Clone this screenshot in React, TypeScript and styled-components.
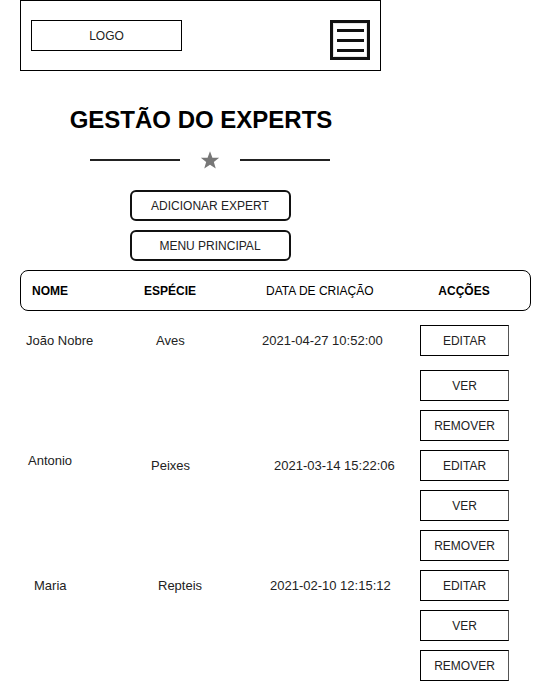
import React from 'react';
import styled, { createGlobalStyle } from 'styled-components';

const GlobalStyle = createGlobalStyle`
    html, body {
        margin: 0;
        padding: 0;
        background: #ffffff;
    }
    body {
        font-family: "Liberation Sans", Arial, sans-serif;
        color: #1a1a1a;
    }
`;

const Page = styled.div`
    width: 533px;
    min-height: 681px;
    display: flex;
    flex-direction: column;
`;

const TopBar = styled.header`
    box-sizing: border-box;
    margin-left: 20px;
    width: 361px;
    height: 71px;
    border: 1px solid #000;
    display: flex;
    justify-content: space-between;
    align-items: flex-start;
    padding: 19px 10px 0 10px;
`;

const LogoBox = styled.div`
    box-sizing: border-box;
    width: 151px;
    height: 31px;
    border: 1px solid #000;
    display: flex;
    align-items: center;
    justify-content: center;
    font-size: 12px;
    color: #222;
`;

const MenuIcon = styled.div`
    box-sizing: border-box;
    width: 40px;
    height: 40px;
    border: 3px solid #111;
    box-shadow: inset 0 0 0 1px #e6e6e6;
    display: flex;
    flex-direction: column;
    justify-content: center;
    align-items: center;
    gap: 7px;

    span {
        display: block;
        width: 27px;
        height: 3px;
        background: #111;
    }
`;

const Hero = styled.section`
    width: 420px;
    display: flex;
    flex-direction: column;
    align-items: center;
    margin-top: 35px;
`;

const Title = styled.h1`
    margin: 0;
    padding-right: 18px;
    font-size: 24px;
    line-height: 28px;
    font-weight: 700;
    color: #000;
`;

const Divider = styled.div`
    display: flex;
    align-items: center;
    gap: 20px;
    margin-top: 16px;
    height: 20px;
`;

const Rule = styled.div`
    width: 90px;
    height: 2px;
    background: #222;
`;

const ButtonStack = styled.div`
    display: flex;
    flex-direction: column;
    gap: 9px;
    margin-top: 20px;
`;

const RoundButton = styled.button`
    box-sizing: border-box;
    width: 161px;
    height: 31px;
    border: 2px solid #111;
    border-radius: 6px;
    background: #fff;
    font-family: "Liberation Sans", Arial, sans-serif;
    font-size: 12px;
    color: #222;
    padding: 0;
`;

const TableHead = styled.div`
    box-sizing: border-box;
    margin: 9px 0 0 20px;
    width: 511px;
    height: 41px;
    border: 1px solid #000;
    border-radius: 8px;
    display: grid;
    grid-template-columns: 112px 122px 154px 88px;
    align-items: center;
    padding-left: 11px;
`;

const HeadCell = styled.div<{ $bold?: boolean; $center?: boolean }>`
    font-size: 12px;
    font-weight: ${p => (p.$bold ? 700 : 400)};
    color: #000;
    text-align: ${p => (p.$center ? 'center' : 'left')};
    white-space: nowrap;
`;

const Rows = styled.div`
    display: flex;
    flex-direction: column;
    gap: 9px;
    margin: 14px 0 0 32px;
`;

const Row = styled.div`
    display: grid;
    grid-template-columns: 112px 122px 154px 88px;
    align-items: start;
`;

const Cell = styled.div<{ $dx?: number; $dy?: number }>`
    height: 31px;
    line-height: 31px;
    font-size: 13px;
    color: #222;
    white-space: nowrap;
    transform: translate(${p => p.$dx ?? 0}px, ${p => p.$dy ?? 0}px);
`;

const Actions = styled.div<{ $first?: boolean }>`
    display: flex;
    flex-direction: column;
    gap: 9px;

    & > button:first-child {
        margin-bottom: ${p => (p.$first ? 5 : 0)}px;
    }
`;

const ActionButton = styled.button`
    box-sizing: border-box;
    width: 89px;
    height: 31px;
    border: 1px solid #000;
    border-right-color: #555;
    background: #fff;
    font-family: "Liberation Sans", Arial, sans-serif;
    font-size: 12px;
    color: #222;
    padding: 0;
`;

const experts = [
    { nome: 'João Nobre', especie: 'Aves', data: '2021-04-27 10:52:00', dx: [-6, 12, -4], dy: [0, 0, 0] },
    { nome: 'Antonio', especie: 'Peixes', data: '2021-03-14 15:22:06', dx: [-4, 7, 8], dy: [-5, 0, 0] },
    { nome: 'Maria', especie: 'Repteis', data: '2021-02-10 12:15:12', dx: [2, 14, 4], dy: [0, 0, 0] },
];

function Star() {
    return (
        <svg width="20" height="20" viewBox="0 0 24 24">
            <polygon
                points="12,1.5 14.9,9.2 23,9.3 16.6,14.3 18.9,22.3 12,17.6 5.1,22.3 7.4,14.3 1,9.3 9.1,9.2"
                fill="#777"
            />
        </svg>
    );
}

export default function App() {
    return (
        <Page>
            <GlobalStyle />
            <TopBar>
                <LogoBox>LOGO</LogoBox>
                <MenuIcon>
                    <span />
                    <span />
                    <span />
                </MenuIcon>
            </TopBar>

            <Hero>
                <Title>GESTÃO DO EXPERTS</Title>
                <Divider>
                    <Rule />
                    <Star />
                    <Rule />
                </Divider>
                <ButtonStack>
                    <RoundButton>ADICIONAR EXPERT</RoundButton>
                    <RoundButton>MENU PRINCIPAL</RoundButton>
                </ButtonStack>
            </Hero>

            <TableHead>
                <HeadCell $bold>NOME</HeadCell>
                <HeadCell $bold>ESPÉCIE</HeadCell>
                <HeadCell>DATA DE CRIAÇÃO</HeadCell>
                <HeadCell $bold $center>ACÇÕES</HeadCell>
            </TableHead>

            <Rows>
                {experts.map((e, i) => (
                    <Row key={i}>
                        <Cell $dx={e.dx[0]} $dy={e.dy[0]}>{e.nome}</Cell>
                        <Cell $dx={e.dx[1]} $dy={e.dy[1]}>{e.especie}</Cell>
                        <Cell $dx={e.dx[2]} $dy={e.dy[2]}>{e.data}</Cell>
                        <Actions $first={i === 0}>
                            <ActionButton>EDITAR</ActionButton>
                            <ActionButton>VER</ActionButton>
                            <ActionButton>REMOVER</ActionButton>
                        </Actions>
                    </Row>
                ))}
            </Rows>
        </Page>
    );
}
